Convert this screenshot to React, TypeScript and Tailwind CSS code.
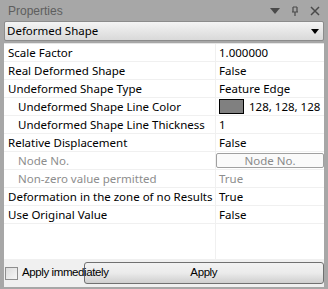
import React from 'react'

type Row = {
  label: string
  value?: React.ReactNode
  indent?: boolean
  muted?: boolean
  flush?: boolean
}

const rows: Row[] = [
  { label: 'Scale Factor', value: '1.000000' },
  { label: 'Real Deformed Shape', value: 'False' },
  { label: 'Undeformed Shape Type', value: 'Feature Edge' },
  {
    label: 'Undeformed Shape Line Color',
    indent: true,
    value: (
      <span className="flex items-center gap-[5px]">
        <span className="w-[25px] h-[15px] bg-[#808080] border border-black" />
        <span>128, 128, 128</span>
      </span>
    ),
  },
  { label: 'Undeformed Shape Line Thickness', indent: true, value: '1' },
  { label: 'Relative Displacement', value: 'False' },
  {
    label: 'Node No.',
    indent: true,
    muted: true,
    flush: true,
    value: (
      <span className="flex w-full h-[15px] items-center justify-center rounded-[2px] border border-[#a0a0a0] bg-[#fafafa] text-[#8a8a8a] leading-none">
        Node No.
      </span>
    ),
  },
  { label: 'Non-zero value permitted', indent: true, muted: true, value: <span className="text-[#8d8d8d]">True</span> },
  { label: 'Deformation in the zone of no Results', value: 'True' },
  { label: 'Use Original Value', value: 'False' },
]

const App = () => {
  return (
    <div
      className="w-[328px] h-[289px] bg-[#a7a7a7] flex flex-col overflow-hidden"
      style={{ fontFamily: '"Noto Sans", "Open Sans", sans-serif' }}
    >
      <div className="h-[21px] flex items-center justify-between pl-[8px] pr-[8px] shrink-0">
        <span className="text-[12px] text-[#5e5e5e]" style={{ fontFamily: '"Liberation Sans", Arial, sans-serif' }}>
          Properties
        </span>
        <div className="flex items-center gap-[10px]">
          <svg width="10" height="6" viewBox="0 0 10 6">
            <path d="M0 0 H10 L5 6 Z" fill="#4a4a4a" />
          </svg>
          <svg width="10" height="10" viewBox="0 0 10 10">
            <path d="M3 1 V6 M7 1 V6 M2 6 H8 M5 6 V10 M3 1 H7" stroke="#4a4a4a" strokeWidth="1.2" fill="none" />
          </svg>
          <svg width="10" height="10" viewBox="0 0 10 10">
            <path d="M1 1 L9 9 M9 1 L1 9" stroke="#4a4a4a" strokeWidth="1.5" />
          </svg>
        </div>
      </div>

      <div className="mx-[4px] h-[20px] shrink-0 flex items-center justify-between pl-[2px] pr-[4px] rounded-[2px] border border-[#8c8c8c] bg-gradient-to-b from-[#f4f4f4] to-[#d9d9d9]">
        <span className="text-[11.5px] text-black">Deformed Shape</span>
        <svg width="8" height="5" viewBox="0 0 8 5">
          <path d="M0 0 H8 L4 5 Z" fill="#000" />
        </svg>
      </div>

      <div className="mx-[4px] mt-[2px] flex-1 bg-white flex flex-col border-t border-[#e5e5e5]">
        {rows.map((r) => (
          <div key={r.label} className="h-[18px] flex border-b border-[#f0f0f0] text-[11.5px] leading-none whitespace-nowrap">
            <div
              className={`w-[212px] flex items-center border-r border-[#f0f0f0] ${r.indent ? 'pl-[14px]' : 'pl-[4px]'} ${
                r.muted ? 'text-[#8d8d8d]' : 'text-black'
              }`}
            >
              {r.label}
            </div>
            <div className={`flex-1 flex items-center text-black ${r.flush ? 'pl-0' : 'pl-[3px]'}`}>{r.value}</div>
          </div>
        ))}
        <div className="flex-1 flex">
          <div className="w-[212px] border-r border-[#f0f0f0]" />
        </div>
      </div>

      <div
        className="mx-[4px] h-[28px] shrink-0 bg-[#f0f0f0] flex items-center pl-[1px]"
        style={{ fontFamily: '"Liberation Sans", Arial, sans-serif' }}
      >
        <span className="w-[13px] h-[13px] shrink-0 border border-[#8e8e8e] bg-gradient-to-br from-[#dcdcdc] to-[#f6f6f6]" />
        <span className="relative z-10 ml-[4px] -mr-[25px] text-[11.5px] text-black tracking-[-0.4px] whitespace-nowrap">
          Apply immediately
        </span>
        <button className="flex-1 h-[22px] rounded-[3px] border border-[#707070] bg-gradient-to-b from-[#f2f2f2] via-[#ebebeb] to-[#cfcfcf] text-[11.5px] tracking-[-0.4px] text-black">
          Apply
        </button>
      </div>
      <div className="h-[2px] shrink-0" />
    </div>
  )
}

export default App
